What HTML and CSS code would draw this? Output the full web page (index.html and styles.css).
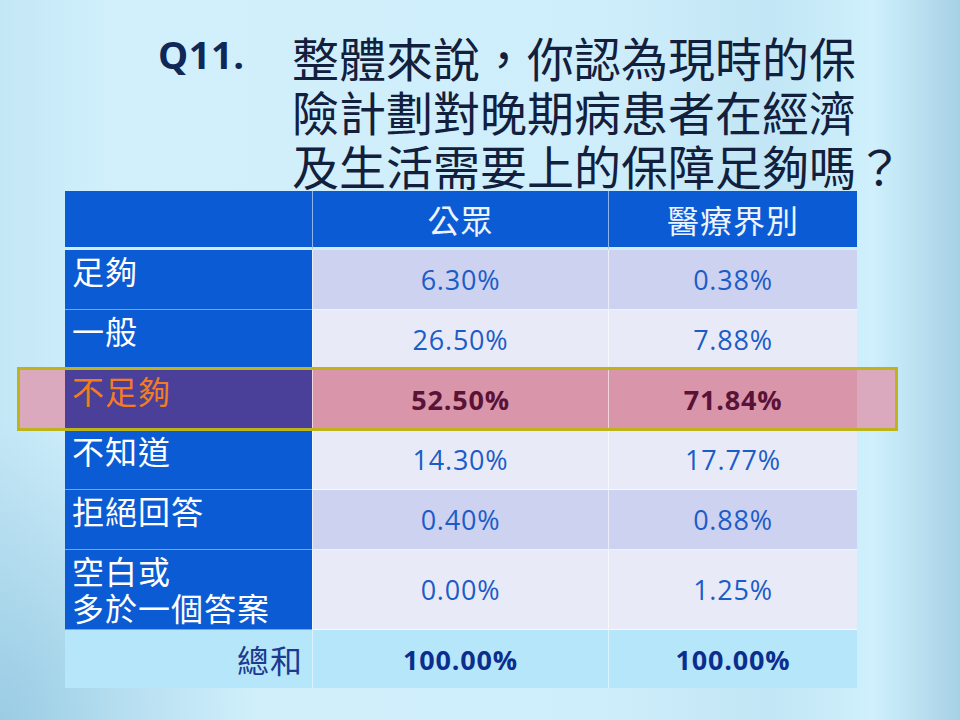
FILE: index.html
```html
<!DOCTYPE html>
<html lang="zh-Hant">
<head>
<meta charset="utf-8">
<title>Q11</title>
<link rel="stylesheet" href="styles.css">
</head>
<body>
<div class="slide">
  <header class="title">
    <span class="qno">Q11.</span>
    <h1 class="question">整體來說，你認為現時的保<br>險計劃對晚期病患者在經濟<br>及生活需要上的保障足夠嗎？</h1>
  </header>
  <table class="results">
    <colgroup>
      <col class="c-label">
      <col class="c-public">
      <col class="c-medical">
    </colgroup>
    <thead>
      <tr class="head">
        <th class="corner"></th>
        <th>公眾</th>
        <th>醫療界別</th>
      </tr>
    </thead>
    <tbody>
      <tr class="odd">
        <th class="label">足夠</th>
        <td>6.30%</td>
        <td>0.38%</td>
      </tr>
      <tr class="even">
        <th class="label">一般</th>
        <td>26.50%</td>
        <td>7.88%</td>
      </tr>
      <tr class="hot">
        <th class="label">不足夠</th>
        <td>52.50%</td>
        <td>71.84%</td>
      </tr>
      <tr class="even">
        <th class="label">不知道</th>
        <td>14.30%</td>
        <td>17.77%</td>
      </tr>
      <tr class="odd">
        <th class="label">拒絕回答</th>
        <td>0.40%</td>
        <td>0.88%</td>
      </tr>
      <tr class="even tall">
        <th class="label">空白或<br>多於一個答案</th>
        <td>0.00%</td>
        <td>1.25%</td>
      </tr>
      <tr class="total">
        <th class="sum">總和</th>
        <td>100.00%</td>
        <td>100.00%</td>
      </tr>
    </tbody>
  </table>
  <div class="highlight"></div>
</div>
</body>
</html>
```

FILE: styles.css
```css
html, body {
  margin: 0;
  padding: 0;
}

body {
  width: 960px;
  height: 720px;
  overflow: hidden;
}

.slide {
  position: relative;
  width: 960px;
  height: 720px;
  box-sizing: border-box;
  padding: 30px 0 0 0;
  background:
    radial-gradient(ellipse 260px 300px at 0% 100%, rgba(140, 195, 222, 0.75), rgba(140, 195, 222, 0) 100%),
    linear-gradient(90deg, #c4e7f6 0%, #d1f0fc 12%, #cfeefb 62%, #c2e6f5 80%, #cff0fc 91%, #b9dff0 96%, #a6d1e4 100%);
  font-family: "Noto Sans CJK TC", "Noto Sans", sans-serif;
}

.title {
  display: flex;
  align-items: flex-start;
  padding-left: 158px;
}

.qno {
  width: 134px;
  flex: none;
  font-family: "Open Sans", "Liberation Sans", sans-serif;
  font-weight: 700;
  font-size: 38px;
  line-height: 54px;
  margin-top: -3px;
  color: #0f2857;
  letter-spacing: 0.5px;
}

.question {
  margin: 0;
  font-family: "Noto Sans CJK TC", sans-serif;
  font-weight: 400;
  font-size: 47px;
  line-height: 54px;
  color: #12203d;
  white-space: nowrap;
}

.results {
  margin: -1px 0 0 65px;
  border-collapse: separate;
  border-spacing: 0;
  table-layout: fixed;
  width: 792px;
}

.c-label { width: 247px; }
.c-public { width: 296px; }
.c-medical { width: 249px; }

.results th,
.results td {
  padding: 0;
  box-sizing: border-box;
}

.head th {
  height: 59px;
  background: #0b5bd4;
  border-bottom: 3px solid #d2ecf9;
  color: #eef4ff;
  font-weight: 400;
  font-size: 32px;
  letter-spacing: 1px;
  text-align: center;
  vertical-align: middle;
}

.head th + th {
  border-left: 1px solid rgba(255, 255, 255, 0.55);
}

tbody tr {
  height: 60px;
}

tbody tr.tall {
  height: 80px;
}

tbody tr.total {
  height: 58px;
}

.label {
  background: #0b5bd4;
  color: #ffffff;
  font-weight: 400;
  font-size: 32px;
  line-height: 37px;
  letter-spacing: 1px;
  text-align: left;
  vertical-align: top;
  padding: 2px 7px 0 7px !important;
  border-bottom: 1px solid rgba(255, 255, 255, 0.45);
  white-space: nowrap;
}

tbody td {
  text-align: center;
  vertical-align: middle;
  font-family: "Open Sans", "Liberation Sans", sans-serif;
  font-size: 27px;
  letter-spacing: 0.8px;
  color: #1c5cc8;
  border-left: 1px solid rgba(255, 255, 255, 0.6);
  border-bottom: 1px solid rgba(255, 255, 255, 0.7);
}

.odd td { background: #cdd2f0; }
.even td { background: #e8ebf7; }

.hot .label {
  background: #4a3f99;
  color: #f27c1f;
}

.hot td {
  background: #d995aa;
  color: #5a1236;
  font-weight: 700;
}

.total th,
.total td {
  background: #b6e6fa;
  border-bottom: 0;
}

.sum {
  color: #1c3b8e;
  font-weight: 400;
  font-size: 32px;
  letter-spacing: 1px;
  text-align: right;
  vertical-align: middle;
  padding-right: 9px !important;
}

.total td {
  color: #0b2e8e;
  font-weight: 700;
  border-left: 1px solid rgba(255, 255, 255, 0.5);
}

.highlight {
  position: absolute;
  left: 17px;
  top: 367px;
  width: 881px;
  height: 64px;
  box-sizing: border-box;
  border: 3px solid #bdb41c;
  background: linear-gradient(90deg, #dba9bd 0, #dba9bd 45px, transparent 45px, transparent 837px, #dba9bd 837px, #dba9bd 100%);
}
```
